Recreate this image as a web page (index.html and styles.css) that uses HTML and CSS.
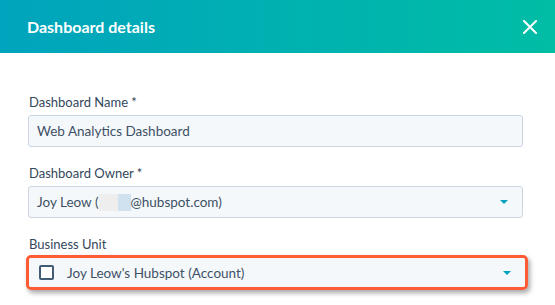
FILE: index.html
```html
<!DOCTYPE html>
<html lang="en">
<head>
    <meta charset="UTF-8">
    <meta name="viewport" content="width=device-width, initial-scale=1.0">
    <title>Dashboard details</title>
    <link rel="stylesheet" href="styles.css">
</head>
<body>

    <header class="modal-header">
        <h1>Dashboard details</h1>
        <button class="close" aria-label="Close">
            <svg width="14" height="14" viewBox="0 0 14 14">
                <path d="M1 1L13 13M13 1L1 13" stroke="#fff" stroke-width="2" stroke-linecap="square"/>
            </svg>
        </button>
    </header>

    <div class="modal-body">
        <div class="field">
            <label>Dashboard Name *</label>
            <div class="input">Web Analytics Dashboard</div>
        </div>

        <div class="field">
            <label>Dashboard Owner *</label>
            <div class="input select">
                <span>Joy Leow (<span class="blur-grey"></span><span class="blur-blue"></span>@hubspot.com)</span>
                <span class="caret"></span>
            </div>
        </div>

        <div class="field">
            <label>Business Unit</label>
            <div class="highlight">
                <div class="input select">
                    <span class="option"><span class="checkbox"></span>Joy Leow's Hubspot (Account)</span>
                    <span class="caret"></span>
                </div>
            </div>
        </div>
    </div>

</body>
</html>
```

FILE: styles.css
```css
body {
    margin: 0;
    font-family: Lato, "Noto Sans", sans-serif;
    color: #33475b;
    background-color: #fff;
}

.modal-header {
    height: 53px;
    display: flex;
    align-items: center;
    justify-content: space-between;
    padding: 0 18px 0 27px;
    background: linear-gradient(90deg, #00a4bd, #00bda5);
    color: #fff;
}

.modal-header h1 {
    margin: 0;
    font-size: 16px;
    font-weight: 700;
}

.close {
    background: none;
    border: none;
    padding: 0;
    width: 14px;
    height: 14px;
    display: flex;
}

.modal-body {
    padding: 41px 32px 0 28px;
}

.field {
    margin-bottom: 18px;
}

.field label {
    display: block;
    font-size: 13px;
    margin-bottom: 5px;
    padding-left: 1px;
}

.input {
    height: 30px;
    box-sizing: content-box;
    border: 1px solid #cbd6e2;
    border-radius: 3px;
    background-color: #f5f8fa;
    display: flex;
    align-items: center;
    padding: 0 12px 0 8px;
    font-size: 13.5px;
    color: #3d5166;
}

.select {
    justify-content: space-between;
    padding-right: 14px;
}

.blur-grey, .blur-blue {
    display: inline-block;
    height: 17px;
    vertical-align: -4px;
}

.blur-grey {
    width: 19px;
    background-color: #eeeeee;
}

.blur-blue {
    width: 13px;
    background-color: #d0e1ef;
}

.caret {
    width: 0;
    height: 0;
    border-left: 4px solid transparent;
    border-right: 4px solid transparent;
    border-top: 4px solid #00a4bd;
}

.highlight {
    margin: -2px -5px 0 -2px;
    border: 3px solid #ff5c35;
    border-radius: 5px;
    box-shadow: 2px 3px 5px rgba(0, 0, 0, 0.35);
}

.highlight .input {
    border: none;
    height: 29px;
    padding-left: 10px;
}

.option {
    display: flex;
    align-items: center;
}

.checkbox {
    width: 11px;
    height: 11px;
    border: 2px solid #425b76;
    border-radius: 2px;
    margin-right: 13px;
    background-color: #fff;
}
```
